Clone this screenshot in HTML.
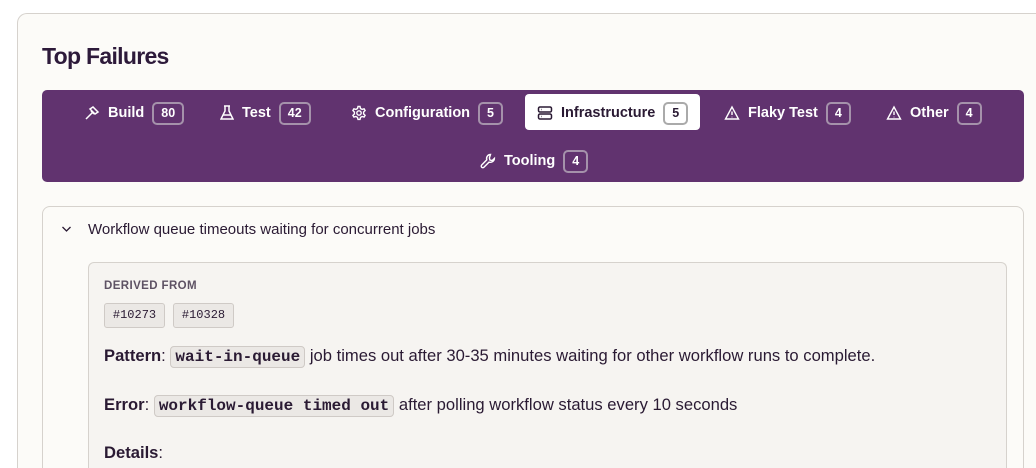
<!DOCTYPE html>
<html><head><meta charset="utf-8"><style>
*{box-sizing:border-box;margin:0;padding:0}
html{width:1036px;height:468px;overflow:hidden}
body{width:1036px;height:468px;overflow:hidden;background:#fff;font-family:"Liberation Sans",sans-serif;color:#2a1a33;position:relative}
.card{position:absolute;left:17px;top:13px;width:1019px;height:455px;border:1px solid #d6d2cd;border-right:none;border-bottom:none;border-radius:10px 0 0 0;background:#fcfbf8}
h1{position:absolute;left:42px;top:43px;font-size:23px;font-weight:bold;letter-spacing:-0.7px;color:#2d1a3a}
.bar{position:absolute;left:42px;top:90px;width:982px;height:92px;background:#61336f;border-radius:5px}
.tab{position:absolute;height:22px;display:flex;align-items:center;color:#fff;font-weight:bold;font-size:14.5px;white-space:nowrap}
.tab svg{margin-right:8px}
.b{display:inline-block;margin-left:8px;border:2px solid #a592ab;border-radius:5px;height:23px;line-height:19px;padding:0 7px;font-size:12.5px;color:#fff}
.act{position:absolute;left:525px;top:94px;width:175px;height:36px;background:#fff;border-radius:4px}
.tab.on{color:#2a1a33}
.tab.on .b{color:#2a1a33;border-color:#aaa}
.inner{position:absolute;left:42px;top:206px;width:982px;height:262px;border:1px solid #d6d2cd;border-bottom:none;border-radius:8px 8px 0 0;background:#fcfbf8}
.box{position:absolute;left:88px;top:262px;width:919px;height:206px;border:1px solid #d6d2cd;border-bottom:none;border-radius:6px 6px 0 0;background:#f6f4f1}
.t{position:absolute;white-space:nowrap}
.chip{position:absolute;top:303px;height:25px;width:61px;border:1px solid #cfcac6;border-radius:3px;background:#ebe8e5;font-family:"Liberation Mono",monospace;font-size:12px;line-height:23px;text-align:center}
code{font-family:"Liberation Mono",monospace;font-weight:bold;font-size:16px;background:#ebe8e5;border:1px solid #cfcac6;border-radius:4px;padding:1px 4px}
.p{font-size:16.6px;line-height:19px}
</style></head><body>
<div class="card"></div>
<h1>Top Failures</h1>
<div class="bar"></div>
<div class="act"></div>
<div class="tab" style="left:84px;top:102px"><svg width="16" height="16" viewBox="0 0 16 16" fill="none" stroke="#fff" stroke-width="1.5"><path d="M2 14l6-6M6 4l3-2 5 5-3 2zM7 6l3 3"/></svg>Build<span class="b">80</span></div>
<div class="tab" style="left:220px;top:102px"><svg width="14" height="16" viewBox="0 0 14 16" fill="none" stroke="#fff" stroke-width="1.5"><path d="M4 1h6M5 1v5L1 14h12L9 6V1M3 10h8"/></svg>Test<span class="b">42</span></div>
<div class="tab" style="left:351px;top:102px"><svg width="16" height="16" viewBox="0 0 16 16" fill="none" stroke="#fff" stroke-width="1.4"><circle cx="8" cy="8" r="2.2"/><path d="M7 1.5h2l.5 2 1.6.9 2-.6 1 1.7-1.5 1.5v1.9l1.5 1.5-1 1.7-2-.6-1.6.9-.5 2H7l-.5-2-1.6-.9-2 .6-1-1.7L3.4 9V7L1.9 5.5l1-1.7 2 .6L6.5 3.5z"/></svg>Configuration<span class="b">5</span></div>
<div class="tab on" style="left:537px;top:102px"><svg width="16" height="16" viewBox="0 0 16 16" fill="none" stroke="#2a1a33" stroke-width="1.5"><rect x="1.5" y="2" width="13" height="5" rx="1.5"/><rect x="1.5" y="9" width="13" height="5" rx="1.5"/><path d="M4 4.5h.5M4 11.5h.5"/></svg>Infrastructure<span class="b">5</span></div>
<div class="tab" style="left:724px;top:102px"><svg width="16" height="16" viewBox="0 0 16 16" fill="none" stroke="#fff" stroke-width="1.4"><path d="M8 2L1.5 14h13zM8 6.5v3.5M8 11.8v.5"/></svg>Flaky Test<span class="b">4</span></div>
<div class="tab" style="left:886px;top:102px"><svg width="16" height="16" viewBox="0 0 16 16" fill="none" stroke="#fff" stroke-width="1.4"><path d="M8 2L1.5 14h13zM8 6.5v3.5M8 11.8v.5"/></svg>Other<span class="b">4</span></div>
<div class="tab" style="left:480px;top:150px"><svg width="16" height="16" viewBox="0 0 16 16" fill="none" stroke="#fff" stroke-width="1.4"><path d="M10.5 1.5a4 4 0 0 0-3.7 5.3L1.7 12a1.4 1.4 0 0 0 2.2 2.2l5.2-5.1a4 4 0 0 0 5.3-3.7l-2.3 2.2-2.2-.5-.5-2.2z"/></svg>Tooling<span class="b">4</span></div>
<div class="inner"></div>
<svg class="t" style="left:61px;top:225px" width="11" height="8" viewBox="0 0 11 8" fill="none" stroke="#2a1a33" stroke-width="1.3"><path d="M1.5 2l4 4 4-4"/></svg>
<div class="t" style="left:88px;top:221px;font-size:15px">Workflow queue timeouts waiting for concurrent jobs</div>
<div class="box"></div>
<div class="t" style="left:104px;top:280px;font-size:11.5px;font-weight:bold;color:#5e5264;letter-spacing:.4px">DERIVED FROM</div>
<div class="chip" style="left:104px">#10273</div>
<div class="chip" style="left:173px">#10328</div>
<div class="t p" style="left:104px;top:346px"><b>Pattern</b>: <code>wait-in-queue</code> job times out after 30-35 minutes waiting for other workflow runs to complete.</div>
<div class="t p" style="left:104px;top:395px"><b>Error</b>: <code>workflow-queue timed out</code> after polling workflow status every 10 seconds</div>
<div class="t p" style="left:104px;top:443px"><b>Details</b>:</div>
</body></html>
